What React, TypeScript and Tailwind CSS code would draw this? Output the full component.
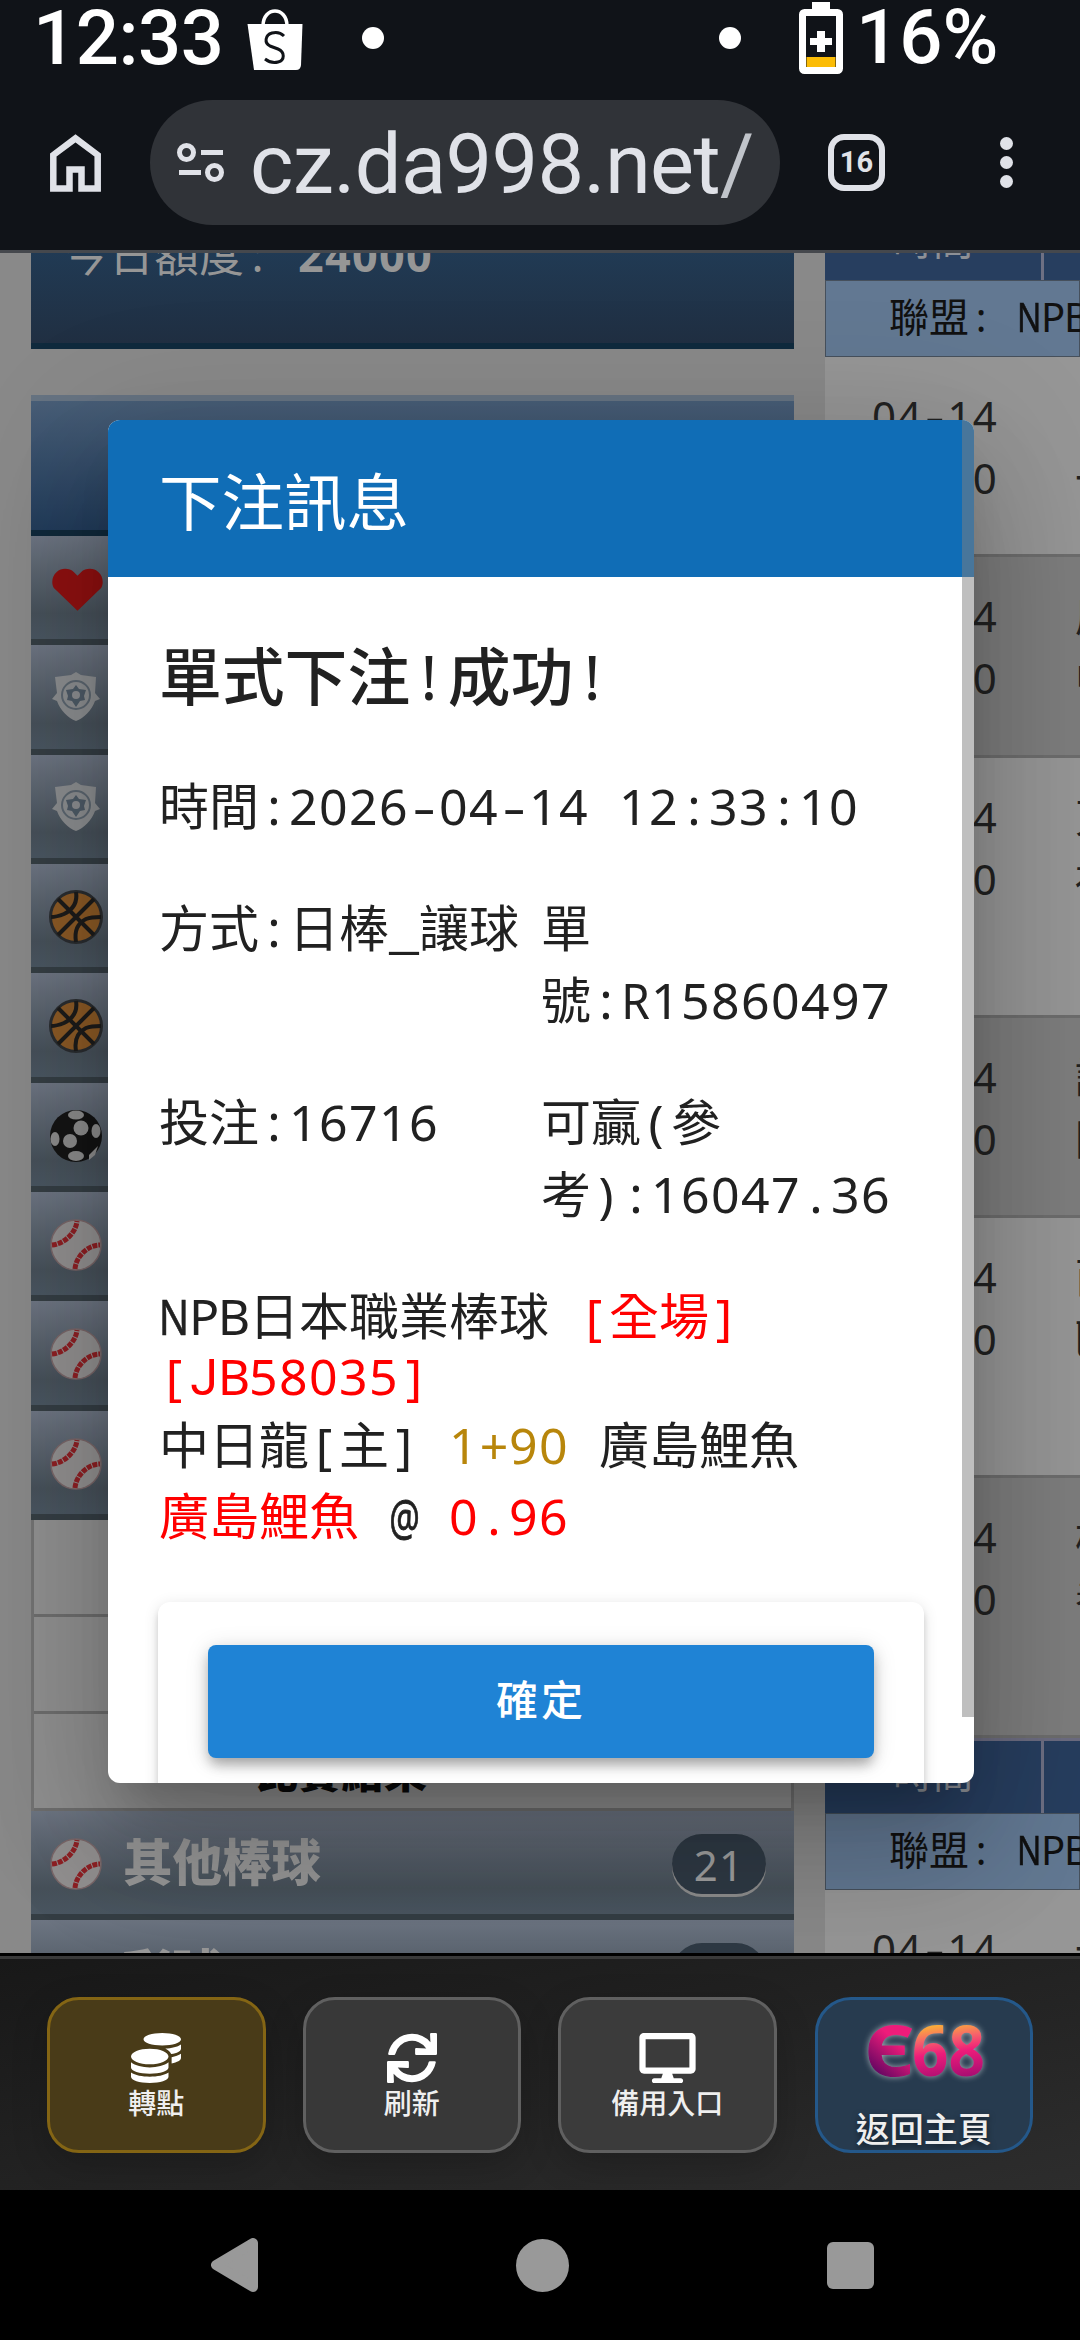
import { FaCoins, FaDesktop, FaSync } from 'react-icons/fa';
import type { ReactNode } from 'react';

// glyphs that need squeezing or stretching to fill their cell
const glyphClass: Record<string, string> = {
  N: 'scale-x-[0.8] [-webkit-text-stroke:0.6px]',
  R: 'scale-x-[0.92]',
  J: 'font-[Roboto]',
  '@': 'scale-x-[0.68] [-webkit-text-stroke:0.8px]',
  _: 'scale-x-[1.35]',
  '-': 'scale-x-[1.45]',
};

// Latin characters sit in 0.6em cells, digits are tracked out to the same pitch
function Mono({ text }: { text: string }) {
  const parts = text.match(/[0-9]+|[ -~]|[^ -~]+/g) ?? [];
  return (
    <>
      {parts.map((part, i) => {
        if (/^[0-9]/.test(part)) {
          return <span key={i} className="tracking-[0.028em]">{part}</span>;
        }
        if (/^[ -~]$/.test(part)) {
          return (
            <span key={i} className="inline-flex w-[0.6em] justify-center whitespace-pre">
              <span className={glyphClass[part]}>{part}</span>
            </span>
          );
        }
        return <span key={i}>{part}</span>;
      })}
    </>
  );
}

function Heart() {
  return (
    <svg viewBox="0 0 54 46" className="mt-[4px] ml-[3px] h-[46px] w-[54px]">
      <path d="M27 45 2 21C-1 16 0 8 5 4c5-5 14-4 18 0l4 4 4-4c4-4 13-5 18 0 5 4 6 12 3 17Z" fill="#8f1010" />
    </svg>
  );
}

function Shield() {
  return (
    <svg viewBox="0 0 50 50" className="mt-px h-[50px] w-[50px]">
      <path d="M25 0l5 3 15 2-1 16 5 6-5 2c-3 9-11 17-19 20C17 46 9 38 6 29l-5-2 5-6L4 5l16-2Z" fill="#8c8e90" />
      <circle cx="25" cy="23" r="14" fill="none" stroke="#5c6670" strokeWidth="2" />
      <path d="M25 13l3 4 7 1-2 6 1 4-5 1-4 6-4-6-5-1 1-4-2-6 7-1Z" fill="#4d5a66" />
      <circle cx="25" cy="23" r="4" fill="#8c8e90" />
    </svg>
  );
}

function Basketball() {
  return (
    <svg viewBox="0 0 54 54" className="mt-[3px] h-[54px] w-[54px] shrink-0">
      <circle cx="27" cy="27" r="25.5" fill="#8c5a26" stroke="#2a2d30" strokeWidth="3" />
      <g fill="none" stroke="#1d1c1b" strokeWidth="4">
        <path d="M9 9l36 36M45 9 9 45" />
        <path d="M27 2c2 12-4 18-12 22-5 2-9 3-13 3M27 52c-2-12 2-19 10-23 5-2 11-2 15-2" />
      </g>
    </svg>
  );
}

function SoccerBall() {
  return (
    <svg viewBox="0 0 54 54" className="mt-[3px] h-[54px] w-[54px] shrink-0">
      <circle cx="27" cy="27" r="26" fill="#141414" />
      <g fill="#8c8c8c">
        <ellipse cx="27" cy="6" rx="8" ry="4.5" />
        <ellipse cx="32" cy="19" rx="7.5" ry="7.5" />
        <ellipse cx="21" cy="32" rx="7" ry="7" />
        <ellipse cx="6" cy="30" rx="4.5" ry="7" />
        <ellipse cx="47" cy="22" rx="4.5" ry="7" />
        <ellipse cx="27" cy="47" rx="8" ry="5" />
        <path d="M40 46l9-9-3 9-6 5Z" />
      </g>
    </svg>
  );
}

function Baseball() {
  return (
    <svg viewBox="0 0 52 52" className="mt-[3px] h-[52px] w-[52px] shrink-0">
      <circle cx="26" cy="26" r="25" fill="#929090" stroke="#7a6769" strokeWidth="1.5" />
      <g fill="none" stroke="#8e2024" strokeWidth="5" strokeDasharray="5 1">
        <path d="M2 26c12-1 24-12 25-24" />
        <path d="M25 50c1-12 12-24 25-24" />
      </g>
    </svg>
  );
}

function SportRow({ icon, label, count }: { icon?: ReactNode; label?: string; count?: string }) {
  return (
    <div className="flex h-[109.33px] shrink-0 items-center border-b-6 border-[#353e44] bg-linear-to-b from-[#6d7582] via-[#47515a] via-75% to-[#4a5661] pr-7 pl-[18px]">
      <div className="flex w-[54px] justify-center">{icon}</div>
      {label && <span className="mt-px ml-5 text-[49.5px] leading-none font-black text-[#989898]">{label}</span>}
      {count && (
        <span className="mt-[3px] ml-auto flex h-[60px] w-[94px] items-center justify-center rounded-full bg-[#2f3a45] text-[42px] text-[#a0a0a0] shadow-[0_3px_0_#8d8d8d]">
          <Mono text={count} />
        </span>
      )}
    </div>
  );
}

function TableHead() {
  return (
    <div className="flex h-[72px] shrink-0 bg-[#273e5f] text-[40px] leading-[64px] text-[#8d9096]">
      <div className="w-[216px] shrink-0 text-center">時間</div>
      <div className="w-[3px] bg-[#6e7083]" />
    </div>
  );
}

function LeagueRow() {
  return (
    <div className="h-[77px] shrink-0 border border-[#46505c] bg-[#627892] pl-[63px] text-[40px] leading-[71px] whitespace-nowrap text-[#111]">
      <Mono text="聯盟: NPB" />
    </div>
  );
}

interface Game {
  time: string;
  away: string;
  home: string;
  className: string;
}

const games: Game[] = [
  { time: '17:00', away: '', home: '一', className: 'h-[200px] bg-[#969696]' },
  { time: '17:00', away: '廣', home: '中', className: 'h-[201px] bg-[#7d7d7d]' },
  { time: '17:00', away: '東', home: '福', className: 'h-[260px] bg-[#969696]' },
  { time: '17:00', away: '讀', home: '阪', className: 'h-[200px] bg-[#7d7d7d]' },
  { time: '17:00', away: '西', home: '歐', className: 'h-[260px] bg-[#969696]' },
  { time: '17:00', away: '橫', home: '養', className: 'h-[260px] bg-[#7d7d7d]' },
];

function GameRow({ time, away, home, className }: Game) {
  return (
    <div className={`flex shrink-0 border-b-3 border-[#6d6d6d] pt-7 text-[42px] leading-[62px] whitespace-nowrap text-[#222] ${className}`}>
      <div className="w-[219px] shrink-0 pr-[46px] text-right">
        <div><Mono text="04-14" /></div>
        <div><Mono text={time} /></div>
      </div>
      <div className="shrink-0 pl-[31px]">
        <div className="h-[62px]">{away}</div>
        <div>{home}</div>
      </div>
    </div>
  );
}

function StatusBar() {
  return (
    <div className="flex h-[76px] items-start font-[Roboto] font-medium text-white">
      <span className="ml-[33px] w-[212px] text-[76px] leading-[76px] tracking-[-0.5px]">12:33</span>
      <svg viewBox="0 0 56 61" className="mt-[9px] ml-[2px] h-[61px] w-14">
        <path d="M16 17c0-20 24-20 24 0" fill="none" stroke="#fff" strokeWidth="3.5" />
        <path d="M.5 15h55L54 56q-.4 5-5 5H7q-4.600-5-5Z" fill="#fff" />
        <path
          d="M37 27c-3-3-8-4-12-3-7 2-8 10-2 13l8 3c7 3 7 11 0 13-5 1.500-9 0-13-3"
          fill="none"
          stroke="#101318"
          strokeWidth="3"
        />
      </svg>
      <span className="mt-[27px] ml-[59px] size-[22px] rounded-full bg-white" />
      <span className="mt-[27px] ml-[335px] size-[22px] rounded-full bg-white" />
      <svg viewBox="0 0 44 72" className="mt-[2px] ml-[58px] h-[72px] w-11">
        <path d="M13 0h18v7h-18z" fill="#fff" />
        <rect x="3.500" y="10.500" width="37" height="58" rx="2" fill="none" stroke="#fff" strokeWidth="7" />
        <path d="M7.500 55h29v10h-29z" fill="#fbbc05" />
        <path d="M18 29h8v7h7v7h-7v7h-8v-7h-7v-7h7z" fill="#fff" />
      </svg>
      <span className="ml-[13px] text-[76px] leading-[75px]">16%</span>
    </div>
  );
}

function AddressBar() {
  return (
    <div className="flex h-[174px] items-start pt-6 text-[#e0e2e8]">
      <svg viewBox="0 0 51 58" className="mt-[34px] ml-[50px] h-[58px] w-[51px]" fill="none" stroke="currentColor" strokeWidth="6.500">
        <path d="M3.300 21 25.500 4.300 47.700 21v33.500H31.500v-19h-12v19H3.300Z" />
      </svg>
      <div className="ml-[49px] flex h-[125px] w-[630px] rounded-full bg-[#303338]">
        <svg viewBox="0 0 48 40" className="mt-[43px] ml-[27px] h-10 w-12" fill="none" stroke="currentColor" strokeWidth="5">
          <circle cx="9.500" cy="9.500" r="7" />
          <circle cx="37.500" cy="29.500" r="7" />
          <path d="M24 9.500h22M2 29.500h22" />
        </svg>
        <div className="ml-[25px] w-[504px] overflow-hidden font-[Roboto] text-[83px] leading-[130px] tracking-[-0.6px] whitespace-nowrap">
          cz.da998.net<span className="tracking-[-4px] text-[#c0c4ca]">/g</span>
        </div>
      </div>
      <div className="mt-[34px] ml-[48px] flex size-[57px] items-center justify-center rounded-2xl border-6 border-current font-[Roboto] text-[29px] leading-none font-bold">
        16
      </div>
      <div className="mt-[37px] ml-[115px] flex flex-col gap-[6px]">
        <span className="size-[13px] rounded-full bg-current" />
        <span className="size-[13px] rounded-full bg-current" />
        <span className="size-[13px] rounded-full bg-current" />
      </div>
    </div>
  );
}

function BetDialog() {
  return (
    <div className="absolute top-[167px] left-[108px] h-[1363px] w-[866px] rounded-xl shadow-[0_33px_45px_-21px_rgba(0,0,0,0.2),0_72px_114px_9px_rgba(0,0,0,0.14),0_27px_138px_24px_rgba(0,0,0,0.12)]">
      <div className="h-full overflow-hidden rounded-xl bg-white text-[50px] leading-[72px] whitespace-nowrap text-[#212121]">
        <div className="h-[157px] bg-[#106db6] pt-[6px] pl-[51px] text-[62.5px] leading-[151px] text-white">下注訊息</div>
        <div className="px-[51px] pt-[59px]">
          <div className="text-[62.8px] leading-[80px] font-medium">
            單式下注<span className="font-normal"><Mono text="!" /></span>成功<span className="font-normal"><Mono text="!" /></span>
          </div>
          <div className="mt-[54px]"><Mono text="時間:2026-04-14 12:33:10" /></div>
          <div className="mt-[50px] grid grid-cols-2">
            <div><Mono text="方式:日棒_讓球" /></div>
            <div>
              <div>單</div>
              <div><Mono text="號:R15860497" /></div>
            </div>
          </div>
          <div className="mt-[50px] grid grid-cols-2">
            <div><Mono text="投注:16716" /></div>
            <div>
              <div><Mono text="可贏(參" /></div>
              <div><Mono text="考):16047.36" /></div>
            </div>
          </div>
          <div className="mt-[56px] leading-[60px]">
            <div className="h-[60px]">
              <Mono text="NPB日本職業棒球 " />
              <span className="text-[#ff0000]"><Mono text="[全場]" /></span>
            </div>
            <div className="h-[60px] text-[#ff0000]"><Mono text="[JB58035]" /></div>
          </div>
          <div className="mt-1 leading-[71px]">
            <div className="h-[71px]">
              <Mono text="中日龍[主] " />
              <span className="text-[#b8860b]"><Mono text="1+90" /></span>
              <Mono text=" 廣島鯉魚" />
            </div>
            <div className="h-[71px]">
              <span className="text-[#ff0000]">廣島鯉魚</span>
              <Mono text=" @ " />
              <span className="text-[#ff0000]"><Mono text="0.96" /></span>
            </div>
          </div>
          <div className="-mx-px mt-[50px] h-[240px] rounded-xl bg-white px-[50px] pt-[43px] shadow-[0_9px_3px_-6px_rgba(0,0,0,0.2),0_6px_6px_0_rgba(0,0,0,0.14),0_3px_15px_0_rgba(0,0,0,0.12)]">
            <button className="flex h-[113px] w-full items-center justify-center rounded-lg bg-[#1f83d5] pb-[4px] text-[42px] leading-none font-medium tracking-[3px] text-white shadow-[0_9px_12px_-3px_rgba(0,0,0,0.2),0_6px_15px_0_rgba(0,0,0,0.14),0_3px_24px_0_rgba(0,0,0,0.12)]">
              確定
            </button>
          </div>
        </div>
        {/* scroll thumb */}
        <div className="absolute top-0 right-0 h-[1297px] w-3 rounded-tr-xl bg-[#808080]/50" />
      </div>
    </div>
  );
}

function ToolButton({ icon, label, className }: { icon: ReactNode; label: string; className: string }) {
  return (
    <button className={`flex h-[156px] flex-1 flex-col items-center rounded-[32px] border-3 pt-[33px] shadow-[0_12px_36px_rgba(0,0,0,0.2)] ${className}`}>
      {icon}
      <span className="mt-[2px] text-[28px] leading-[36px] font-medium text-[#efefef]">{label}</span>
    </button>
  );
}

function Logo() {
  return (
    <svg viewBox="0 0 132 66" className="mt-[17px] h-[66px] w-[132px] overflow-visible">
      <defs>
        <linearGradient id="logo-e" gradientUnits="userSpaceOnUse" x1="14" y1="56" x2="40" y2="26">
          <stop offset="0" stopColor="#5a0560" />
          <stop offset="1" stopColor="#ee1c7a" />
        </linearGradient>
        <linearGradient id="logo-68" gradientUnits="userSpaceOnUse" x1="92" y1="62" x2="84" y2="4">
          <stop offset="0" stopColor="#a80d72" />
          <stop offset="0.45" stopColor="#ee1c7a" />
          <stop offset="0.7" stopColor="#f6646a" />
          <stop offset="1" stopColor="#fcc02c" />
        </linearGradient>
      </defs>
      <g
        strokeWidth="1"
        className="font-['Noto_Sans'] text-[70px] font-bold drop-shadow-[0_0_3px_rgba(255,255,255,0.6)]"
      >
        <text x="7" y="59" textLength="49" lengthAdjust="spacingAndGlyphs" fill="url(#logo-e)" stroke="url(#logo-e)">
          Є
        </text>
        <text x="54" y="59" textLength="73" lengthAdjust="spacingAndGlyphs" fill="url(#logo-68)">
          68
        </text>
      </g>
    </svg>
  );
}

export default function App() {
  return (
    <div className="flex h-[2340px] w-[1080px] flex-col overflow-hidden bg-[#101318] font-['Noto_Sans','Noto_Sans_CJK_TC',sans-serif]">
      <StatusBar />
      <AddressBar />
      <div className="h-[3px] shrink-0 bg-[#45484d]" />

      <main className="relative flex h-[1700px] shrink-0 items-start overflow-hidden bg-[#898989]">
        <div className="-mt-10 ml-[31px] flex w-[763px] flex-col">
          <div className="h-[136px] border-b-6 border-[#0f2a3d] bg-linear-to-b from-[#203f5c] to-[#202f42] pt-3 pl-[33px] text-[45px] leading-[60px] text-[#969696]">
            <Mono text="今日額度: " />
            <span className="font-bold"><Mono text="24000" /></span>
          </div>
          <div className="mt-[46px] h-[141px] border-t-6 border-b-6 border-t-[#667382] border-b-[#10293b] bg-linear-to-b from-[#485e77] to-[#223c5b]" />
          <SportRow icon={<Heart />} />
          <SportRow icon={<Shield />} />
          <SportRow icon={<Shield />} />
          <SportRow icon={<Basketball />} />
          <SportRow icon={<Basketball />} />
          <SportRow icon={<SoccerBall />} />
          <SportRow icon={<Baseball />} />
          <SportRow icon={<Baseball />} />
          <SportRow icon={<Baseball />} />
          <div className="border-x-3 border-[#737373] bg-[#909090]">
            <div className="h-[97px] border-b-3 border-[#6e6e6e]" />
            <div className="h-[97px] border-b-3 border-[#6e6e6e]" />
            <div className="h-[97px] border-b-3 border-[#6e6e6e] pl-[221px] text-[43px] leading-[116px] font-black text-[#0a0a0a]">
              比賽結果
            </div>
          </div>
          <SportRow icon={<Baseball />} label="其他棒球" count="21" />
          <SportRow label="彩球" count="3" />
        </div>

        <div className="-mt-[45px] ml-[31px] flex w-[255px] flex-col overflow-hidden">
          <TableHead />
          <LeagueRow />
          {games.map((game) => (
            <GameRow key={game.home} {...game} />
          ))}
          <div className="h-[3px] shrink-0 bg-[#6c6c80]" />
          <TableHead />
          <LeagueRow />
          <GameRow time="17:00" away="一" home="" className="h-[200px] bg-[#969696]" />
        </div>

        <BetDialog />
      </main>

      <div className="h-[3px] shrink-0 bg-black" />
      <div className="flex h-[234px] shrink-0 gap-[37px] border-t-3 border-[#3a3a3a] bg-linear-to-br from-[#181818] to-[#2d2d2d] px-[47px] pt-[38px]">
        <ToolButton icon={<FaCoins className="size-[50px] text-white" />} label="轉點" className="border-[#846514] bg-[#493b18]" />
        <ToolButton icon={<FaSync className="size-[50px] text-white" />} label="刷新" className="border-[#606060] bg-[#383838]" />
        <ToolButton icon={<FaDesktop className="h-[50px] w-[57px] text-white" />} label="備用入口" className="border-[#606060] bg-[#3b3b3b]" />
        <button className="ml-px flex h-[156px] flex-1 flex-col items-center overflow-hidden rounded-[36px] border-3 border-[#24588a] bg-[#273b4f]">
          <Logo />
          <span className="mt-6 text-[34px] leading-[44px] font-medium whitespace-nowrap text-[#efefef] [text-shadow:0_3px_6px_rgba(0,0,0,0.5)]">返回主頁</span>
        </button>
      </div>

      <div className="flex h-[150px] shrink-0 items-center bg-black text-[#999]">
        <svg viewBox="0 0 48 54" className="ml-[211px] h-[54px] w-12">
          <path d="M5 27 42 5v44Z" fill="currentColor" stroke="currentColor" strokeWidth="10" strokeLinejoin="round" />
        </svg>
        <span className="ml-[257px] size-[53px] rounded-full bg-current" />
        <span className="ml-[258px] size-[47px] rounded-md bg-current" />
      </div>
    </div>
  );
}
